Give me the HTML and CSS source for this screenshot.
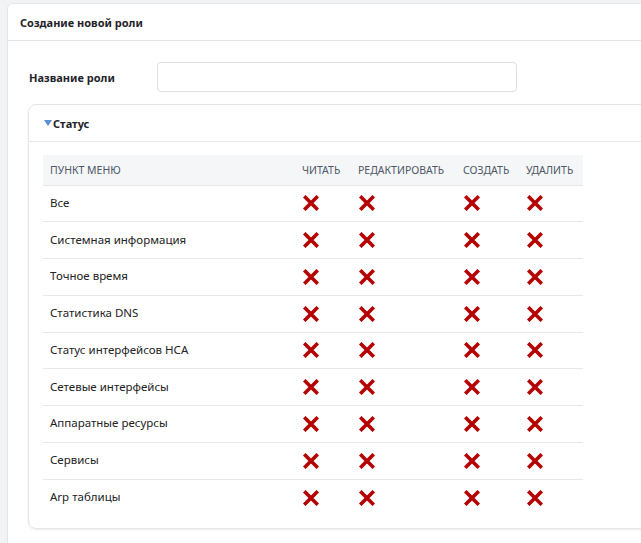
FILE: index.html
```html
<!DOCTYPE html>
<html lang="ru">
<head>
    <meta charset="UTF-8">
    <meta name="viewport" content="width=device-width, initial-scale=1.0">
    <title>Создание новой роли</title>
    <link rel="stylesheet" href="styles.css">
</head>
<body>
    <div class="card">
        <div class="card-header">Создание новой роли</div>
        <div class="card-body">
            <div class="form-row">
                <label class="form-label" for="role_name">Название роли</label>
                <input class="form-input" id="role_name" type="text">
            </div>

            <div class="panel">
                <div class="panel-header">
                    <span class="caret"></span>Статус
                </div>
                <div class="panel-body">
                    <table class="perm-table">
                        <colgroup>
                            <col class="col-name">
                            <col class="col-read">
                            <col class="col-edit">
                            <col class="col-create">
                            <col class="col-delete">
                        </colgroup>
                        <thead>
                            <tr>
                                <th>Пункт меню</th>
                                <th>Читать</th>
                                <th>Редактировать</th>
                                <th>Создать</th>
                                <th>Удалить</th>
                            </tr>
                        </thead>
                        <tbody id="table_body">
                        </tbody>
                    </table>
                </div>
            </div>
        </div>
    </div>

    <script>
        // Пункты меню раздела "Статус"
        const items = [
            'Все',
            'Системная информация',
            'Точное время',
            'Статистика DNS',
            'Статус интерфейсов НСА',
            'Сетевые интерфейсы',
            'Аппаратные ресурсы',
            'Сервисы',
            'Arp таблицы'
        ];

        const cross = '<svg class="icon-no" width="16" height="16" viewBox="0 0 16 16">' +
            '<path d="M2.5 2.5 L13.5 13.5 M13.5 2.5 L2.5 13.5" stroke="#b50000" stroke-width="3.6" stroke-linecap="square" fill="none"/></svg>';

        const table_body = document.getElementById('table_body');
        items.forEach(name => {
            const row = table_body.insertRow();
            row.insertCell(0).textContent = name;
            for (let i = 1; i <= 4; i++) {
                row.insertCell(i).innerHTML = cross;
            }
        });
    </script>
</body>
</html>
```

FILE: styles.css
```css
body {
    margin: 0;
    padding: 3px 0 0 7px;
    background-color: #f2f3f5;
    font-family: "Noto Sans", Arial, sans-serif;
    color: #222;
    overflow: hidden;
}

.card {
    width: 700px;
    height: 620px;
    background-color: #fff;
    border: 1px solid #e3e5e8;
    border-radius: 6px;
}

.card-header {
    height: 36px;
    line-height: 37px;
    padding-left: 12px;
    font-size: 11px;
    font-weight: bold;
    color: #1f2329;
    border-bottom: 1px solid #e3e5e8;
}

.card-body {
    padding: 21px 0 0 20px;
}

.form-row {
    display: flex;
    align-items: center;
}

.form-label {
    width: 128px;
    margin-left: 1px;
    font-size: 11px;
    font-weight: bold;
    color: #1f2329;
}

.form-input {
    box-sizing: border-box;
    width: 360px;
    height: 30px;
    border: 1px solid #dcdfe3;
    border-radius: 4px;
    background: #fff;
}

.panel {
    width: 700px;
    margin-top: 12px;
    border: 1px solid #e3e5e8;
    border-radius: 8px;
    box-shadow: 0 1px 2px rgba(0, 0, 0, 0.08);
}

.panel-header {
    display: flex;
    align-items: center;
    height: 36px;
    padding-left: 15px;
    font-size: 11px;
    font-weight: bold;
    color: #1f2329;
    border-bottom: 1px solid #e3e5e8;
}

.caret {
    width: 0;
    height: 0;
    margin-right: 1px;
    border-left: 4.5px solid transparent;
    border-right: 4.5px solid transparent;
    border-top: 6px solid #5b8fd4;
}

.panel-body {
    padding: 13px 0 12px 14px;
}

.perm-table {
    width: 540px;
    border-collapse: collapse;
    table-layout: fixed;
}

.col-name { width: 252px; }
.col-read { width: 56px; }
.col-edit { width: 105px; }
.col-create { width: 63px; }
.col-delete { width: 64px; }

.perm-table th,
.perm-table td {
    box-sizing: border-box;
    padding: 0 7px;
    text-align: left;
    white-space: nowrap;
}

.perm-table th {
    height: 30px;
    background-color: #f5f6f8;
    font-size: 10.5px;
    font-weight: normal;
    color: #4f5866;
    text-transform: uppercase;
}

.perm-table td {
    height: 36.75px;
    padding-bottom: 2px;
    font-size: 11.5px;
    color: #222;
    border-top: 1px solid #e6e8eb;
}

.icon-no {
    display: block;
    margin: 2px 0 0 1px;
}
```
